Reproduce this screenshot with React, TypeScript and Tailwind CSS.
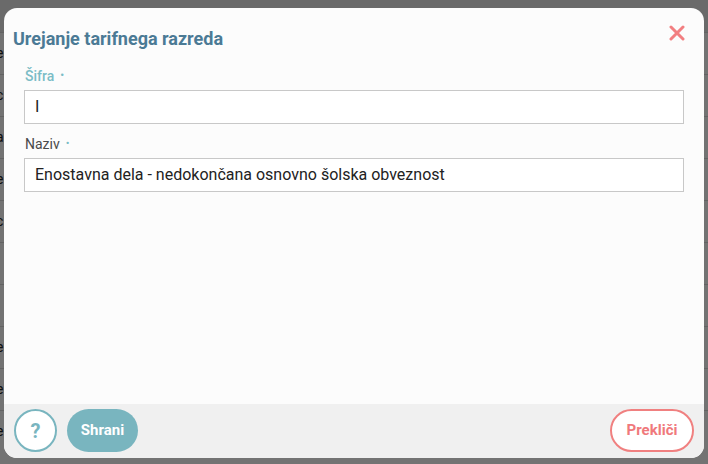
import React from 'react';

const rows = ['e', 'c', 'a', 'e', 'c', '-', '.', 'e', 'e', 'e'];

function BackgroundPage() {
  return (
    <div className="h-[464px] w-[708px] overflow-hidden bg-white">
      <div className="h-[32px] bg-[#ececec]" />
      {rows.map((ch, i) => (
        <div
          key={i}
          className="flex h-[42px] items-center border-t border-[#dcdcdc] text-[14px] text-[#222]"
        >
          <span className="-ml-[4px]">{ch}</span>
        </div>
      ))}
    </div>
  );
}

function CloseIcon() {
  return (
    <svg width="16" height="16" viewBox="0 0 16 16" fill="none">
      <path d="M2 2 L14 14 M14 2 L2 14" stroke="#f27f81" strokeWidth="3" strokeLinecap="round" />
    </svg>
  );
}

function Field({ label, value, active }: { label: string; value: string; active?: boolean }) {
  return (
    <div className="flex flex-col gap-[4px]">
      <label
        className={`flex h-[20px] items-center gap-[6px] pl-[1px] text-[14px] ${
          active ? 'font-medium text-[#7bbcc6]' : 'font-normal text-[#4a4a4a]'
        }`}
      >
        {label}
        <span className="text-[11px] text-[#7bbcc6]">•</span>
      </label>
      <div className="flex h-[34px] items-center border border-[#c8c8c8] bg-white px-[10px] text-[16px] text-[#222]">
        {value}
      </div>
    </div>
  );
}

export default function App() {
  return (
    <div className="relative h-[464px] w-[708px] overflow-hidden" style={{ fontFamily: 'Roboto, "Noto Sans", sans-serif' }}>
      <BackgroundPage />
      <div className="absolute inset-0 bg-black/55" />
      <div className="absolute left-[4px] top-[8px] flex h-[450px] w-[700px] flex-col overflow-hidden rounded-[13px] bg-[#fcfcfc]">
        <header className="flex items-start justify-between pl-[9px] pr-[19px] pt-[19px]">
          <h2 className="text-[18px] font-bold leading-[24px] text-[#4b7a95]">Urejanje tarifnega razreda</h2>
          <button className="-mt-[2px]">
            <CloseIcon />
          </button>
        </header>
        <div className="flex flex-1 flex-col gap-[10px] px-[20px] pt-[15px]">
          <Field label="Šifra" value="I" active />
          <Field label="Naziv" value="Enostavna dela - nedokončana osnovno šolska obveznost" />
        </div>
        <footer className="flex h-[54px] items-center justify-between bg-[#f0f0f0] px-[10px] pb-[1px]">
          <div className="flex items-center gap-[10px]">
            <button className="flex h-[43px] w-[43px] items-center justify-center rounded-full border-2 border-[#79b5bf] bg-white text-[20px] font-bold text-[#79b5bf]">
              ?
            </button>
            <button className="flex h-[43px] w-[71px] items-center justify-center rounded-full bg-[#79b5bf] text-[15px] font-bold text-white">
              Shrani
            </button>
          </div>
          <button className="flex h-[43px] w-[84px] items-center justify-center rounded-full border-2 border-[#f08080] bg-white text-[15px] font-bold text-[#f0797c]">
            Prekliči
          </button>
        </footer>
      </div>
    </div>
  );
}
